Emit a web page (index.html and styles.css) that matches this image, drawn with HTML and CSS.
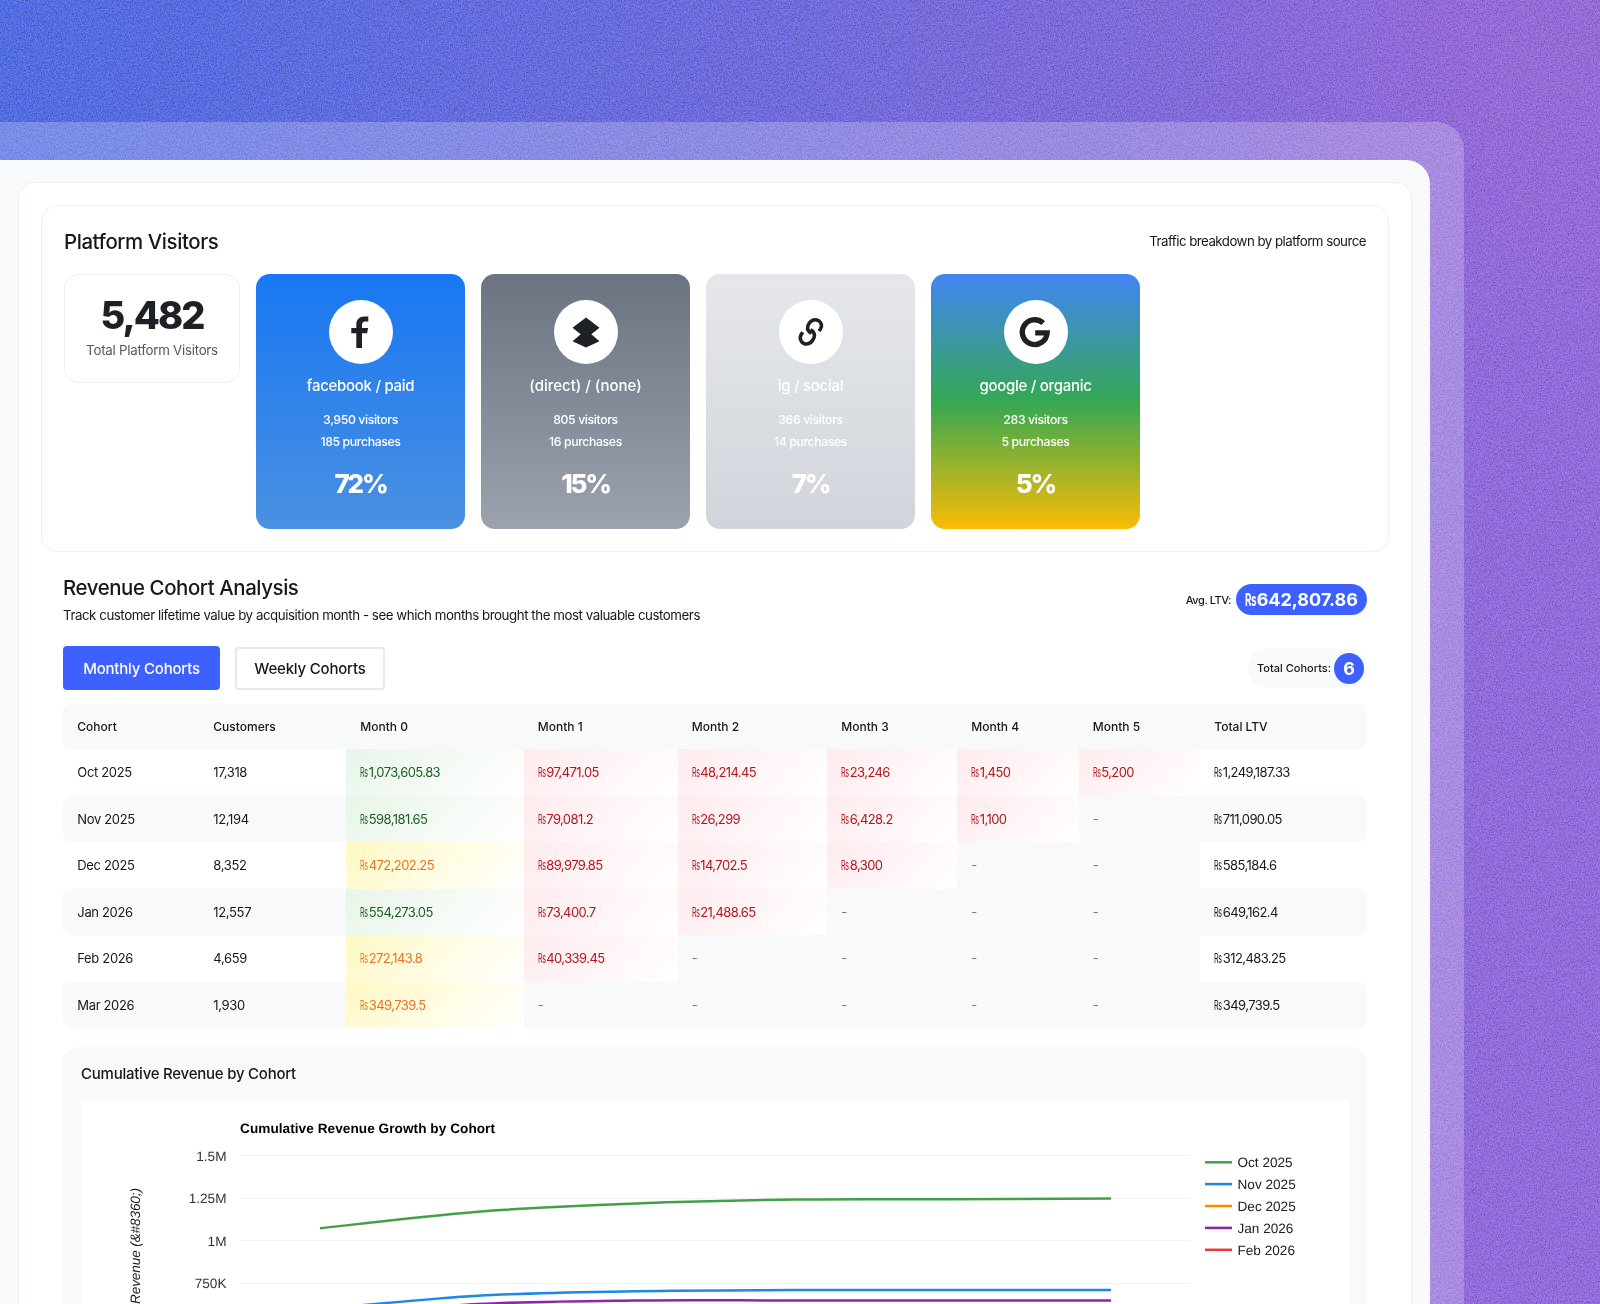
FILE: index.html
```html
<!DOCTYPE html>
<html lang="en">

<head>
  <meta charset="UTF-8">
  <meta name="viewport" content="width=device-width, initial-scale=1.0">
  <title>Platform Visitors</title>
  <link rel="stylesheet" href="styles.css">
</head>

<body>

<!-- Grain over the gradient -->
<svg class="grain" width="1600" height="1304">
  <filter id="noise" x="0" y="0" width="100%" height="100%" color-interpolation-filters="sRGB">
    <feTurbulence type="fractalNoise" baseFrequency="0.75" numOctaves="2" seed="4" />
    <feColorMatrix type="matrix" values="1.6 1.2 0 0 -0.76  1.6 1.2 0 0 -0.76  1.6 1.2 0 0 -0.76  0 0 0 0 1" />
  </filter>
  <rect width="1600" height="1304" filter="url(#noise)" />
</svg>

<div class="frame">
  <div class="window">
    <div class="panel">

      <!-- Platform visitors -->
      <section class="visitors">
        <div class="section-head">
          <h2>Platform Visitors</h2>
          <p class="traffic">Traffic breakdown by platform source</p>
        </div>
        <div class="platforms">
          <div class="total">
            <div class="total-number">5,482</div>
            <div class="total-label">Total Platform Visitors</div>
          </div>
          <div class="platform facebook">
            <div class="icon">
              <svg width="22" height="34" viewBox="0 0 22 34"><path d="M6.300 33V18.200H1.300V12.900H6.300V9.500C6.300 4.500 9.500 1.500 14.200 1.500H18.300V6.500H15.200C13 6.500 12 7.700 12 10V12.900H18.100L17.100 18.200H12V33Z" fill="#1d2025" /></svg>
            </div>
            <div class="name">facebook / paid</div>
            <div class="detail">3,950 visitors</div>
            <div class="detail">185 purchases</div>
            <div class="percent">72%</div>
          </div>
          <div class="platform direct">
            <div class="icon">
              <svg width="28" height="31" viewBox="0 0 28 31"><path d="M14 0.500L27.500 10.700L19.300 17.200L27.500 24.200L14 30.500L0.500 24.200L8.700 17.200L0.500 10.700Z" fill="#1d2025" /></svg>
            </div>
            <div class="name">(direct) / (none)</div>
            <div class="detail">805 visitors</div>
            <div class="detail">16 purchases</div>
            <div class="percent">15%</div>
          </div>
          <div class="platform instagram">
            <div class="icon">
              <svg width="26" height="30" viewBox="0 0 26 30" fill="none" stroke="#1d2025" stroke-width="3.600"><path d="M13.500 16.200C8.600 14 8.700 9.500 11.300 6C13.300 3.200 17 1.700 20.300 3.500C23.600 5.300 24.500 9 22.300 12.300L21 14" /><path d="M12.500 12.800C17.300 15 17.200 19.800 14.700 23.300C12.700 26.500 9 28 5.600 26.300C2.100 24.500 1.300 20.300 3.500 17L4.800 15.200" /></svg>
            </div>
            <div class="name">ig / social</div>
            <div class="detail">366 visitors</div>
            <div class="detail">14 purchases</div>
            <div class="percent">7%</div>
          </div>
          <div class="platform google">
            <div class="icon">
              <svg width="34" height="32" viewBox="0 0 34 32"><path d="M24.200 7.100A12.400 12.400 0 1 0 28.100 16.900H16.200" fill="none" stroke="#1d2025" stroke-width="5.400" /></svg>
            </div>
            <div class="name">google / organic</div>
            <div class="detail">283 visitors</div>
            <div class="detail">5 purchases</div>
            <div class="percent">5%</div>
          </div>
        </div>
      </section>

      <!-- Revenue cohorts -->
      <section class="revenue">
        <div class="revenue-head">
          <div>
            <h2>Revenue Cohort Analysis</h2>
            <p class="subtitle">Track customer lifetime value by acquisition month - see which months brought the most valuable customers</p>
          </div>
          <div class="ltv">
            <span class="ltv-label">Avg. LTV:</span>
            <span class="ltv-value"><span class="rs">₨</span>642,807.86</span>
          </div>
        </div>

        <div class="toolbar">
          <div class="tabs">
            <button class="tab active">Monthly Cohorts</button>
            <button class="tab">Weekly Cohorts</button>
          </div>
          <div class="count"><span>Total Cohorts:</span><b>6</b></div>
        </div>

        <table class="cohorts">
          <colgroup>
            <col class="c-cohort"><col class="c-customers"><col class="c-m0"><col class="c-m1"><col class="c-m2"><col class="c-m3"><col class="c-m4"><col class="c-m5"><col class="c-total">
          </colgroup>
          <thead>
            <tr><th>Cohort</th><th>Customers</th><th>Month 0</th><th>Month 1</th><th>Month 2</th><th>Month 3</th><th>Month 4</th><th>Month 5</th><th>Total LTV</th></tr>
          </thead>
          <tbody>
            <tr><td>Oct 2025</td><td>17,318</td><td class="high"><span class="rs">₨</span>1,073,605.83</td><td class="low"><span class="rs">₨</span>97,471.05</td><td class="low"><span class="rs">₨</span>48,214.45</td><td class="low"><span class="rs">₨</span>23,246</td><td class="low"><span class="rs">₨</span>1,450</td><td class="low"><span class="rs">₨</span>5,200</td><td><span class="rs">₨</span>1,249,187.33</td></tr>
            <tr><td>Nov 2025</td><td>12,194</td><td class="high"><span class="rs">₨</span>598,181.65</td><td class="low"><span class="rs">₨</span>79,081.2</td><td class="low"><span class="rs">₨</span>26,299</td><td class="low"><span class="rs">₨</span>6,428.2</td><td class="low"><span class="rs">₨</span>1,100</td><td class="none">-</td><td><span class="rs">₨</span>711,090.05</td></tr>
            <tr><td>Dec 2025</td><td>8,352</td><td class="mid"><span class="rs">₨</span>472,202.25</td><td class="low"><span class="rs">₨</span>89,979.85</td><td class="low"><span class="rs">₨</span>14,702.5</td><td class="low"><span class="rs">₨</span>8,300</td><td class="none">-</td><td class="none">-</td><td><span class="rs">₨</span>585,184.6</td></tr>
            <tr><td>Jan 2026</td><td>12,557</td><td class="high"><span class="rs">₨</span>554,273.05</td><td class="low"><span class="rs">₨</span>73,400.7</td><td class="low"><span class="rs">₨</span>21,488.65</td><td class="none">-</td><td class="none">-</td><td class="none">-</td><td><span class="rs">₨</span>649,162.4</td></tr>
            <tr><td>Feb 2026</td><td>4,659</td><td class="mid"><span class="rs">₨</span>272,143.8</td><td class="low"><span class="rs">₨</span>40,339.45</td><td class="none">-</td><td class="none">-</td><td class="none">-</td><td class="none">-</td><td><span class="rs">₨</span>312,483.25</td></tr>
            <tr><td>Mar 2026</td><td>1,930</td><td class="mid"><span class="rs">₨</span>349,739.5</td><td class="none">-</td><td class="none">-</td><td class="none">-</td><td class="none">-</td><td class="none">-</td><td><span class="rs">₨</span>349,739.5</td></tr>
          </tbody>
        </table>

        <div class="chart-card">
          <h3>Cumulative Revenue by Cohort</h3>
          <svg class="chart" width="1268" height="400" viewBox="0 0 1268 400">
            <text class="chart-title" x="159" y="33" textLength="255">Cumulative Revenue Growth by Cohort</text>
            <g class="grid">
              <path d="M159 55.500H1110M159 98.500H1110M159 140.500H1110M159 183.500H1110" />
            </g>
            <g class="axis">
              <text x="145.500" y="60.500">1.5M</text>
              <text x="145.500" y="103">1.25M</text>
              <text x="145.500" y="145.500">1M</text>
              <text x="145.500" y="188">750K</text>
            </g>
            <text class="axis-title" transform="translate(58.500 204) rotate(-90)" textLength="116">Revenue (&amp;#8360;)</text>
            <g class="lines">
              <path stroke="#43a047" d="M239 128.300C265 125.500 345 115.800 397 111.700S502 105.500 555 103.500S661 100.300 714 99.600S819 99.500 872 99.300S1004 98.500 1030 98.400" />
              <path stroke="#1e88e5" d="M239 209C265 206.900 345 198.700 397 195.700S502 192.200 555 191.200S661 190.300 714 190.100S819 189.900 872 189.900H1030" />
              <path stroke="#8e24aa" d="M239 216.600C265 214.500 345 206.800 397 204.100S502 201.100 555 200.500S661 200.500 714 200.500H1030" />
            </g>
            <g class="lines">
              <path stroke="#43a047" d="M1124 62.300H1151" />
              <path stroke="#1e88e5" d="M1124 84.100H1151" />
              <path stroke="#fb8c00" d="M1124 106H1151" />
              <path stroke="#8e24aa" d="M1124 127.900H1151" />
              <path stroke="#e53935" d="M1124 149.800H1151" />
            </g>
            <g class="legend">
              <text x="1156.500" y="67">Oct 2025</text>
              <text x="1156.500" y="89">Nov 2025</text>
              <text x="1156.500" y="111">Dec 2025</text>
              <text x="1156.500" y="133">Jan 2026</text>
              <text x="1156.500" y="155">Feb 2026</text>
            </g>
          </svg>
        </div>
      </section>

    </div>
  </div>
</div>

</body>
</html>
```
FILE: styles.css
```css
* {
  box-sizing: border-box;
}

body {
  margin: 0;
  height: 1304px;
  overflow: hidden;
  font-family: Inter, "Liberation Sans", sans-serif;
  color: #15171a;
  background:
    radial-gradient(circle at 1600px 0, rgba(160, 98, 200, 0.3), rgba(160, 98, 200, 0) 360px),
    linear-gradient(98deg, #4a66df 0%, #6565da 38%, #7c64d7 66%, #8b65d7 85%, #8d66d8 100%);
}

h2, h3, p {
  margin: 0;
  font-weight: 500;
}

.grain {
  position: absolute;
  top: 0;
  left: 0;
  opacity: 0.42;
  mix-blend-mode: soft-light;
}

.frame {
  position: relative;
  width: 1464px;
  height: 1182px;
  margin-top: 122px;
  padding: 38px 34px 0 0;
  overflow: hidden;
  border-radius: 0 28px 0 0;
  background: rgba(255, 255, 255, 0.22);
}

.window {
  height: 1144px;
  padding: 22px 18px 0 18px;
  overflow: hidden;
  border-radius: 0 24px 0 0;
  background: #f8f9fb;
}

.panel {
  width: 1394px;
  height: 1300px;
  padding: 22px;
  border: 1px solid #eceef1;
  border-radius: 16px;
  background: #fff;
}

/* Platform visitors */
.visitors {
  height: 347px;
  padding: 21px 22px;
  border: 1px solid #eff0f2;
  border-radius: 16px;
}

.section-head {
  display: flex;
  justify-content: space-between;
  align-items: center;
  height: 29px;
}

h2 {
  font-size: 20.400px;
  line-height: 28px;
  letter-spacing: -0.400px;
  font-weight: 450;
  white-space: nowrap;
}

.traffic {
  padding-bottom: 1px;
  font-size: 13.300px;
  letter-spacing: -0.530px;
  font-weight: 430;
}

.platforms {
  display: flex;
  gap: 16px;
  align-items: flex-start;
  margin-top: 18px;
}

.total {
  width: 176px;
  height: 109px;
  padding-top: 19px;
  border: 1px solid #eff0f2;
  border-radius: 14px;
  text-align: center;
}

.total-number {
  font-size: 38px;
  line-height: 43px;
  font-weight: 780;
  letter-spacing: -2px;
  color: #1d2025;
}

.total-label {
  margin-top: 3px;
  font-size: 13.300px;
  line-height: 20px;
  letter-spacing: -0.250px;
  color: #55585e;
}

.platform {
  width: 209px;
  height: 255px;
  padding-top: 26px;
  border-radius: 14px;
  color: #fff;
  text-align: center;
}

.facebook { background: linear-gradient(#1877f2, #4a90e2); }
.direct { background: linear-gradient(#6b7280, #9ca3af); }
.instagram { background: linear-gradient(#e5e7eb, #d1d5db); }
.google { background: linear-gradient(#4285f4, #34a853 50%, #fbbc05); }

.icon {
  display: flex;
  align-items: center;
  justify-content: center;
  width: 64px;
  height: 64px;
  margin: 0 auto 11px;
  border-radius: 50%;
  background: #fff;
}

.name {
  margin-bottom: 12px;
  font-size: 15px;
  line-height: 22px;
  letter-spacing: -0.280px;
  font-weight: 500;
}

.direct .name {
  letter-spacing: 0;
}

.detail {
  font-size: 12.300px;
  line-height: 22px;
  letter-spacing: -0.400px;
  font-weight: 500;
}

.percent {
  margin-top: 14px;
  font-size: 26px;
  line-height: 34px;
  font-weight: 800;
  letter-spacing: -2.200px;
}

/* Revenue cohorts */
.revenue {
  padding: 22px 22px 0;
}

.revenue-head,
.toolbar {
  display: flex;
  justify-content: space-between;
  align-items: center;
}

.subtitle {
  font-size: 13.300px;
  line-height: 20px;
  margin-top: 3px;
  letter-spacing: -0.450px;
  font-weight: 430;
}

.ltv {
  display: flex;
  align-items: center;
  gap: 5px;
}

.ltv-label {
  font-size: 11px;
  letter-spacing: -0.400px;
  font-weight: 500;
}

.ltv-value {
  width: 131px;
  height: 31px;
  border-radius: 16px;
  background: #3e60ff;
  color: #fff;
  font-size: 18px;
  line-height: 31px;
  font-weight: 700;
  text-align: center;
  white-space: nowrap;
}

.toolbar {
  height: 44px;
  margin-top: 21px;
}

.tabs {
  display: flex;
  align-items: center;
  gap: 15px;
}

.tab {
  width: 150px;
  height: 43px;
  padding: 0;
  border: 2px solid #e7e8eb;
  border-radius: 4px;
  background: #fff;
  color: #15171a;
  font-family: inherit;
  font-size: 15px;
  letter-spacing: -0.200px;
  font-weight: 500;
}

.tab.active {
  width: 157px;
  height: 44px;
  border-color: #3e60ff;
  background: #3e60ff;
  color: #fff;
}

.count {
  display: flex;
  align-items: center;
  justify-content: space-between;
  width: 119px;
  height: 38px;
  padding: 0 3px 0 9px;
  border-radius: 19px;
  background: #f8f9fb;
  font-size: 11px;
  font-weight: 500;
}

.count b {
  width: 30px;
  height: 31px;
  border-radius: 50%;
  background: #3e60ff;
  color: #fff;
  font-size: 18px;
  line-height: 31px;
  text-align: center;
}

/* Cohort table */
.cohorts {
  width: 1304px;
  margin-top: 14px;
  border-spacing: 0;
  table-layout: fixed;
}

.c-cohort { width: 136px; }
.c-customers { width: 147px; }
.c-m0 { width: 177.500px; }
.c-m1 { width: 154px; }
.c-m2 { width: 149.500px; }
.c-m3 { width: 130px; }
.c-m4 { width: 121.500px; }
.c-m5 { width: 121.500px; }
.c-total { width: 167px; }

.cohorts th,
.cohorts td {
  padding: 0 0 0 14.300px;
  text-align: left;
  white-space: nowrap;
}

.cohorts th {
  height: 45px;
  font-size: 12px;
  font-weight: 530;
  background: #f8f9fb;
}

.cohorts td {
  height: 46.500px;
  font-size: 13px;
  letter-spacing: -0.340px;
}

.cohorts td:nth-child(n+3) {
  letter-spacing: -0.580px;
}

.cohorts tbody tr:nth-child(even) td {
  background-color: #f8f9fb;
}

.cohorts th:first-child,
.cohorts td:first-child {
  border-radius: 8px 0 0 8px;
}

.cohorts th:last-child,
.cohorts td:last-child {
  border-radius: 0 8px 8px 0;
}

.cohorts tbody td.high {
  background: linear-gradient(135deg, #e8f5e9, #fff);
  color: #1b5e20;
}

.cohorts tbody td.mid {
  background: linear-gradient(135deg, #fff9c4, #fff);
  color: #e67422;
}

.cohorts tbody td.low {
  background: linear-gradient(135deg, #ffebee, #fff);
  color: #b0161c;
}

.cohorts tbody td.none {
  background: #f8f9fb;
  color: #777b82;
}

/* Rupee sign, condensed */
.rs {
  display: inline-block;
  width: 0.650em;
  letter-spacing: 0;
  text-align: left;
  transform: scaleX(0.550);
  transform-origin: left;
}

/* Chart */
.chart-card {
  height: 500px;
  margin-top: 19px;
  padding: 16px 18px 0;
  border-radius: 16px;
  background: #f8f9fb;
}

h3 {
  margin-bottom: 15px;
  font-size: 15px;
  line-height: 22px;
  letter-spacing: -0.240px;
}

.chart {
  display: block;
  background: #fff;
  font-family: "Liberation Sans", Arial, sans-serif;
  font-size: 13.600px;
  text-rendering: geometricPrecision;
}

.chart-title {
  font-weight: 700;
  fill: #000;
}

.grid path {
  stroke: #f1f2f3;
}

.axis text {
  fill: #333;
  text-anchor: end;
}

.axis-title {
  font-style: italic;
  fill: #222;
}

.lines path {
  fill: none;
  stroke-width: 2.500;
}

.legend text {
  fill: #222;
}
```
